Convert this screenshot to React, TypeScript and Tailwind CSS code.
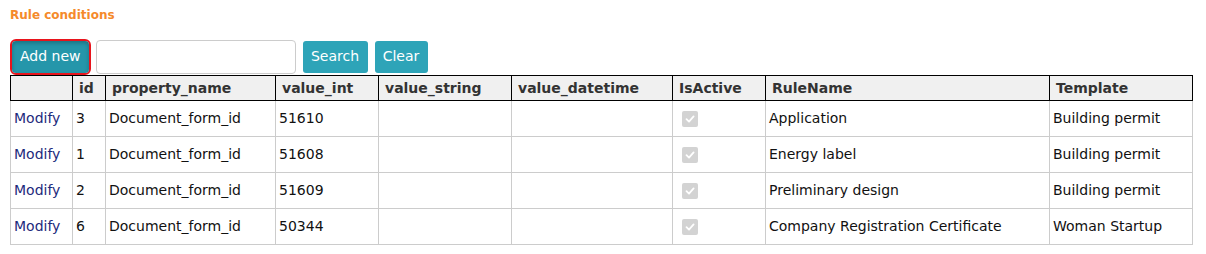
import React from "react";

const rows = [
  { id: "3", prop: "Document_form_id", vint: "51610", rule: "Application", tpl: "Building permit" },
  { id: "1", prop: "Document_form_id", vint: "51608", rule: "Energy label", tpl: "Building permit" },
  { id: "2", prop: "Document_form_id", vint: "51609", rule: "Preliminary design", tpl: "Building permit" },
  { id: "6", prop: "Document_form_id", vint: "50344", rule: "Company Registration Certificate", tpl: "Woman Startup" },
];

const widths = [62, 33, 170, 103, 133, 161, 93, 284, 143];
const heads = ["", "id", "property_name", "value_int", "value_string", "value_datetime", "IsActive", "RuleName", "Template"];

function Check() {
  return (
    <div className="w-4 h-4 rounded-[2px] bg-[#d3d3d3] flex items-center justify-center">
      <svg width="12" height="12" viewBox="0 0 12 12">
        <path d="M2.5 6.2 L5 8.6 L9.6 3.4" fill="none" stroke="#ffffff" strokeWidth="1.8" strokeLinecap="round" strokeLinejoin="round" />
      </svg>
    </div>
  );
}

export default function App() {
  return (
    <div className="w-[1206px] h-[254px] bg-white text-[14px] text-[#111]" style={{ fontFamily: '"DejaVu Sans", Verdana, sans-serif' }}>
      <div className="pl-[10px] pt-[8px] h-[38px]">
        <div className="text-[12px] font-bold text-[#f58a2a] leading-[15px]">Rule conditions</div>
      </div>
      <div className="flex items-center pl-[10px] h-[37px]">
        <div className="rounded-[6px] border-2 border-[#e8141c] p-0">
          <button className="h-[32px] px-[8px] rounded-[4px] bg-[#2596aa] text-white text-[14px] shadow-[inset_0_2px_4px_rgba(0,0,0,0.25)]">Add new</button>
        </div>
        <input className="ml-[5px] w-[200px] h-[34px] border border-[#ccc] rounded-[4px] bg-white" />
        <button className="ml-[7px] h-[32px] w-[65px] rounded-[3px] bg-[#2ea4b8] text-white text-[14px]">Search</button>
        <button className="ml-[7px] h-[32px] w-[53px] rounded-[3px] bg-[#2ea4b8] text-white text-[14px]">Clear</button>
      </div>
      <table className="ml-[10px] border-collapse table-fixed w-[1182px]">
        <colgroup>
          {widths.map((w, i) => (
            <col key={i} style={{ width: w }} />
          ))}
        </colgroup>
        <thead>
          <tr className="h-[25px] bg-[#f0f0f0]">
            {heads.map((h, i) => (
              <th key={i} className="border border-black text-left font-bold text-[#333] pl-[6px] py-0 leading-[16px]">
                {h}
              </th>
            ))}
          </tr>
        </thead>
        <tbody>
          {rows.map((r, i) => (
            <tr key={i} className="h-[36px]">
              <td className="border border-[#ccc] pl-[3px] text-[#1d2a7c]">Modify</td>
              <td className="border border-[#ccc] pl-[3px]">{r.id}</td>
              <td className="border border-[#ccc] pl-[3px]">{r.prop}</td>
              <td className="border border-[#ccc] pl-[3px]">{r.vint}</td>
              <td className="border border-[#ccc] pl-[3px]"></td>
              <td className="border border-[#ccc] pl-[3px]"></td>
              <td className="border border-[#ccc] pl-[9px]"><Check /></td>
              <td className="border border-[#ccc] pl-[3px]">{r.rule}</td>
              <td className="border border-[#ccc] pl-[3px]">{r.tpl}</td>
            </tr>
          ))}
        </tbody>
      </table>
    </div>
  );
}
